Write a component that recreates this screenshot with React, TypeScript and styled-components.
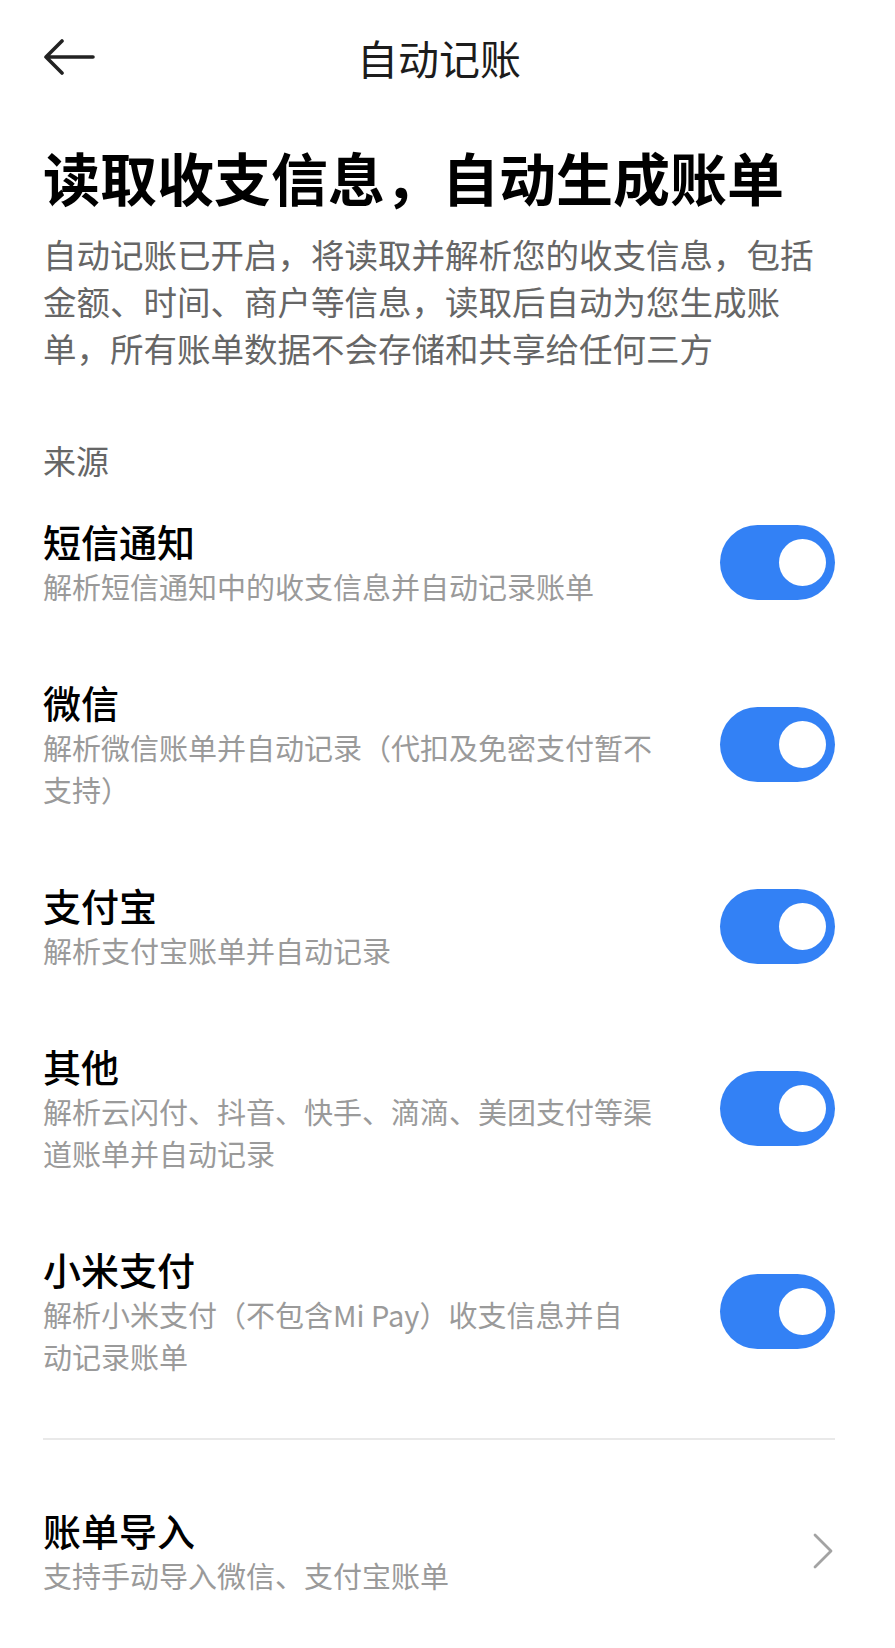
import React, { useState } from 'react'
import styled, { createGlobalStyle } from 'styled-components'

const GlobalStyle = createGlobalStyle`
  html, body {
    margin: 0;
    padding: 0;
    background: #ffffff;
  }
  body {
    font-family: "Noto Sans CJK SC", "Noto Sans", sans-serif;
    color: #000;
  }
  * {
    box-sizing: border-box;
  }
`

const Page = styled.div`
  width: 895px;
  min-height: 1648px;
  padding: 0 60px 0 43px;
  background: #fff;
`

const Header = styled.header`
  height: 114px;
  display: grid;
  grid-template-columns: 1fr auto 1fr;
  align-items: center;
`

const BackButton = styled.button`
  justify-self: start;
  display: flex;
  padding: 0;
  border: none;
  background: none;
  cursor: pointer;
`

const HeaderTitle = styled.h1`
  margin: 0;
  font-size: 41px;
  font-weight: 400;
  line-height: 56px;
  color: #1c1c1c;
`

const Heading = styled.h2`
  margin: 26px 0 0;
  font-size: 57px;
  font-weight: 700;
  line-height: 72px;
  color: #000;
  white-space: nowrap;
`

const Intro = styled.p`
  margin: 17.5px 0 0;
  font-size: 33.5px;
  line-height: 47px;
  color: #666;
  white-space: nowrap;
`

const SectionLabel = styled.div`
  margin-top: 68px;
  font-size: 33px;
  line-height: 43px;
  color: #666;
`

const Row = styled.div`
  display: flex;
  align-items: center;
  justify-content: space-between;
  padding: 35.5px 0;
`

const RowText = styled.div`
  display: flex;
  flex-direction: column;
`

const RowTitle = styled.div`
  font-size: 38px;
  font-weight: 500;
  line-height: 48px;
  color: #000;
`

const RowDesc = styled.div`
  font-size: 29px;
  line-height: 42px;
  color: #9a9a9a;
  white-space: nowrap;
`

const Track = styled.button<{ $on: boolean }>`
  flex-shrink: 0;
  width: 115px;
  height: 75px;
  border-radius: 38px;
  border: none;
  padding: 0 9px 0 14px;
  display: flex;
  align-items: center;
  justify-content: ${p => (p.$on ? 'flex-end' : 'flex-start')};
  background: ${p => (p.$on ? '#3381f5' : '#e3e3e3')};
  cursor: pointer;
`

const Knob = styled.span`
  width: 47px;
  height: 47px;
  border-radius: 50%;
  background: #fff;
`

const Divider = styled.hr`
  margin: 25.5px 0 30.5px;
  height: 2px;
  border: none;
  background: #e9e9e9;
`

const Chevron = styled.svg`
  flex-shrink: 0;
  margin-right: 1px;
`

type Source = { title: string; lines: string[] }

const sources: Source[] = [
  { title: '短信通知', lines: ['解析短信通知中的收支信息并自动记录账单'] },
  { title: '微信', lines: ['解析微信账单并自动记录（代扣及免密支付暂不', '支持）'] },
  { title: '支付宝', lines: ['解析支付宝账单并自动记录'] },
  { title: '其他', lines: ['解析云闪付、抖音、快手、滴滴、美团支付等渠', '道账单并自动记录'] },
  { title: '小米支付', lines: ['解析小米支付（不包含Mi Pay）收支信息并自', '动记录账单'] },
]

const intro = [
  '自动记账已开启，将读取并解析您的收支信息，包括',
  '金额、时间、商户等信息，读取后自动为您生成账',
  '单，所有账单数据不会存储和共享给任何三方',
]

const withBreaks = (lines: string[]) =>
  lines.map((l, i) => (
    <React.Fragment key={i}>
      {i > 0 && <br />}
      {l}
    </React.Fragment>
  ))

const Switch: React.FC<{ on: boolean; onToggle: () => void }> = ({ on, onToggle }) => (
  <Track $on={on} role="switch" aria-checked={on} onClick={onToggle}>
    <Knob />
  </Track>
)

const App: React.FC = () => {
  const [enabled, setEnabled] = useState<boolean[]>(sources.map(() => true))

  const toggle = (idx: number) =>
    setEnabled(prev => prev.map((v, i) => (i === idx ? !v : v)))

  return (
    <>
      <GlobalStyle />
      <Page>
        <Header>
          <BackButton aria-label="返回">
            <svg width="52" height="36" viewBox="0 0 52 36" fill="none">
              <path
                d="M50 18H3M19 2L3 18l16 16"
                stroke="#222"
                strokeWidth="3.6"
                strokeLinecap="round"
                strokeLinejoin="round"
              />
            </svg>
          </BackButton>
          <HeaderTitle>自动记账</HeaderTitle>
          <div />
        </Header>

        <Heading>读取收支信息，自动生成账单</Heading>
        <Intro>{withBreaks(intro)}</Intro>

        <SectionLabel>来源</SectionLabel>
        {sources.map((s, idx) => (
          <Row key={s.title}>
            <RowText>
              <RowTitle>{s.title}</RowTitle>
              <RowDesc>{withBreaks(s.lines)}</RowDesc>
            </RowText>
            <Switch on={enabled[idx]} onToggle={() => toggle(idx)} />
          </Row>
        ))}

        <Divider />

        <Row>
          <RowText>
            <RowTitle>账单导入</RowTitle>
            <RowDesc>支持手动导入微信、支付宝账单</RowDesc>
          </RowText>
          <Chevron width="22" height="36" viewBox="0 0 22 36" fill="none">
            <path
              d="M3 2l16 16L3 34"
              stroke="#a3a3a3"
              strokeWidth="2.8"
              strokeLinecap="round"
              strokeLinejoin="round"
            />
          </Chevron>
        </Row>
      </Page>
    </>
  )
}

export default App
